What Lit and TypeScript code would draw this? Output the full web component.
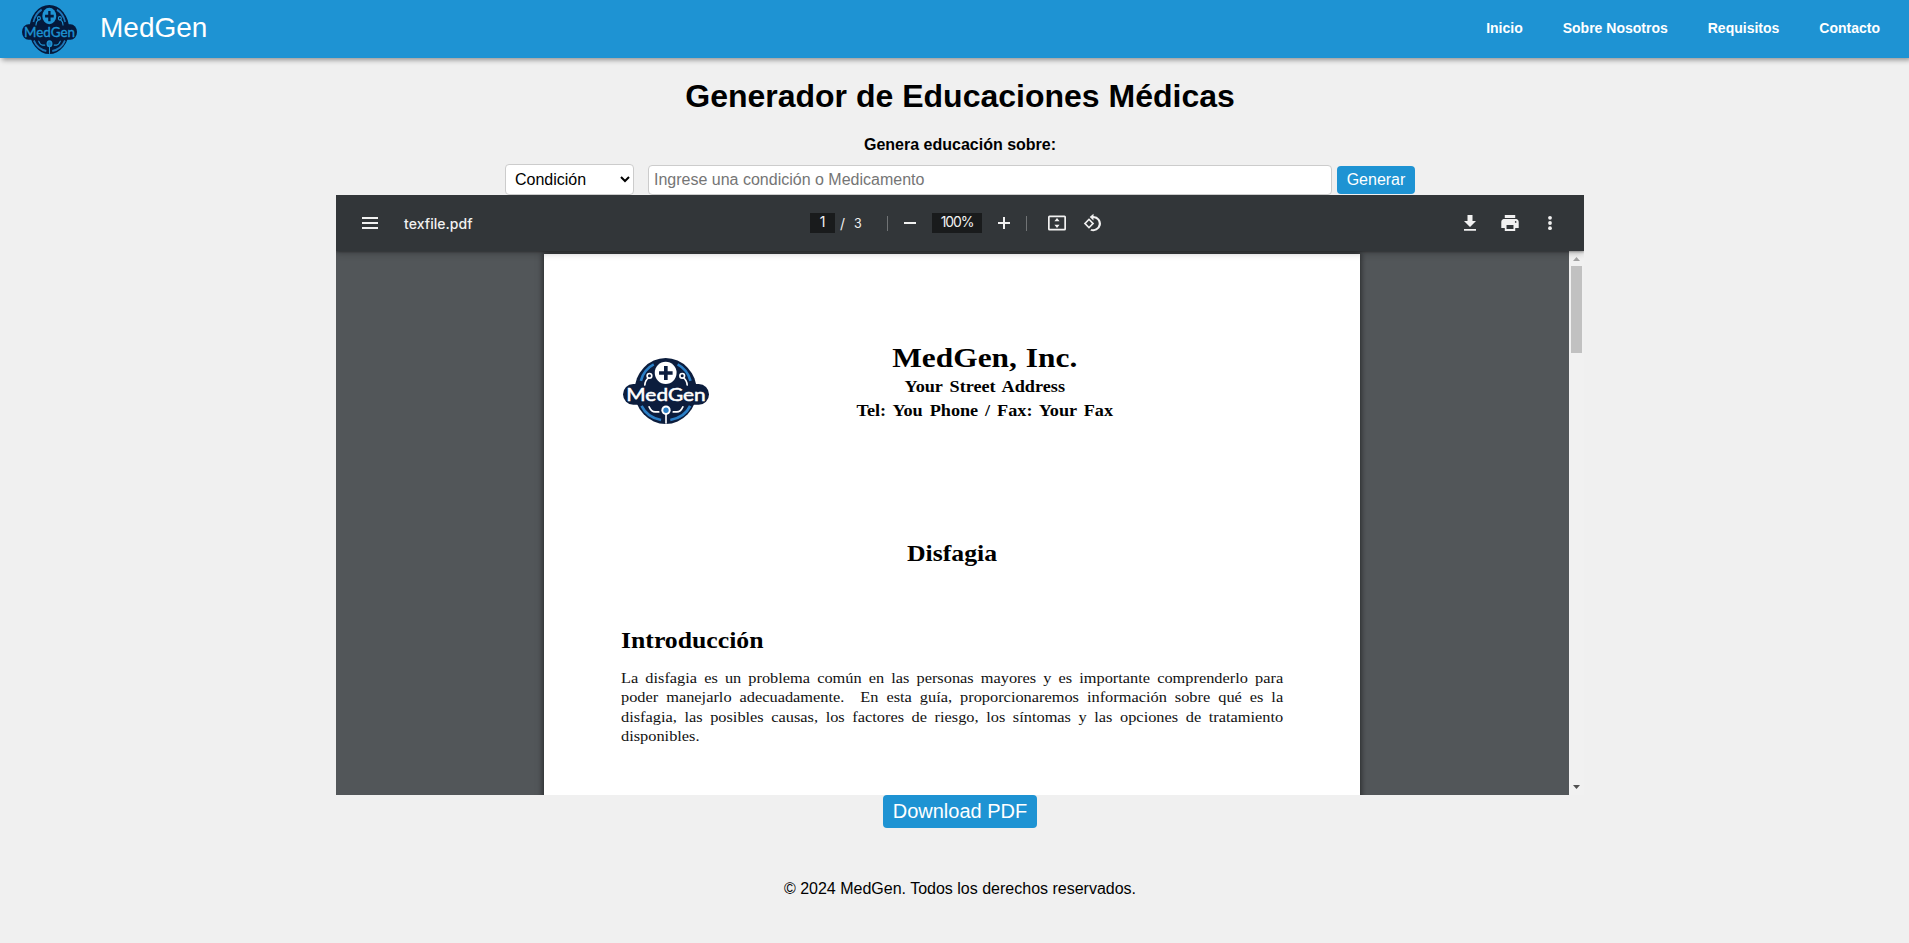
import { LitElement, html, css } from "lit";
import { customElement, property } from "lit/decorators.js";

@customElement("med-logo")
class MedLogo extends LitElement {
  static styles = css`
    :host { display: block; --ink: #0c1d3d; --light: #fff; --accent: #2b7fc6; }
    svg { display: block; width: 100%; height: 100%; }
    .ink { fill: var(--ink); }
    .light { fill: var(--light); }
    .accent { fill: var(--accent); }
    .arc { fill: none; stroke: var(--accent); stroke-width: 8; }
    .wire { fill: none; stroke: var(--light); stroke-width: 5; stroke-linecap: round; }
    .word { fill: var(--light); stroke: var(--light); stroke-width: 1.5; font: 400 53px Lato, sans-serif; }
  `;
  render() {
    return html`<svg viewBox="40 54 260 196" preserveAspectRatio="none">
      <ellipse class="ink" cx="169" cy="152" rx="94" ry="98" />
      <path class="arc" d="M94 122 Q103 88 133 73 M205 73 Q235 88 244 122 M96 196 Q113 230 155 238 M183 238 Q227 230 243 196" />
      <rect class="ink" x="40" y="131" width="260" height="62" rx="31" />
      <circle class="light" cx="169" cy="98" r="33" />
      <path class="ink" d="M164 78h11v15h15v11h-15v15h-11v-15h-15V93h15z" />
      <path class="wire" d="M106 134 Q107 120 117 113 M234 134 Q233 120 223 113 M119 199 Q126 214 137 214 H148 M221 199 Q214 214 203 214 H192 M170 222V247" />
      <circle class="wire" cx="120" cy="107" r="7" />
      <circle class="wire" cx="219" cy="107" r="7" />
      <circle class="light" cx="170" cy="209" r="14" />
      <circle class="accent" cx="170" cy="209" r="8" />
      <text class="word" x="50" y="183" textLength="240" lengthAdjust="spacingAndGlyphs">MedGen</text>
    </svg>`;
  }
}

@customElement("pdf-viewer")
class PdfViewer extends LitElement {
  @property() name = "texfile.pdf";

  static styles = css`
    :host { display: flex; flex-direction: column; width: 1248px; height: 600px; overflow: hidden; background: #525659; }
    .toolbar {
      display: grid; grid-template-columns: 1fr auto 1fr; align-items: center; flex: none; height: 56px;
      background: #323639; color: #f1f1f1; position: relative; z-index: 1; box-sizing: border-box;
      box-shadow: 0 -2px 8px rgba(0,0,0,.09), 0 4px 8px rgba(0,0,0,.06), 0 1px 2px rgba(0,0,0,.3), 0 2px 6px rgba(0,0,0,.15);
      font: 500 14px Inter, sans-serif;
    }
    .start { display: flex; align-items: center; gap: 22px; padding-left: 22px; }
    .title { letter-spacing: 0.05px; }
    .mid { display: flex; align-items: center; font-weight: 400; padding-right: 7px; }
    .end { display: flex; justify-content: flex-end; gap: 16px; padding-right: 22px; }
    svg { display: block; width: 24px; height: 24px; fill: #f1f1f1; flex: none; }
    .small { width: 20px; height: 20px; }
    .field { background: #191b1c; height: 20px; line-height: 18px; text-align: center; }
    .pageno { width: 25px; }
    .zoom { width: 50px; letter-spacing: -1.1px; margin: 0 12px; }
    .slash { margin-left: 5px; width: 8px; }
    .count { margin-left: 6px; width: 33px; font-size: 12.5px; }
    .bar { width: 1px; height: 15px; background: #707375; }
    .out { margin-left: 12px; }
    .in { margin-right: 12px; }
    .fit { margin: 0 16px 0 20px; }
    .body { flex: 1; display: flex; min-height: 0; }
    .canvas { flex: 1; display: flex; align-items: flex-start; padding: 3px 0 0 208px; }
    .page {
      box-sizing: border-box; width: 816px; height: 1056px; background: #fff; color: #111;
      padding: 86px 77px 0; font-family: "Liberation Serif", serif; box-shadow: 0 0 6px 1px rgba(0,0,0,.55);
    }
    .letterhead { display: grid; grid-template-columns: 86px 1fr; height: 180px; }
    .mark { width: 86px; height: 66px; margin: 18px 0 0 2px; }
    .firm { display: flex; flex-direction: column; align-items: center; font-weight: 700; padding-right: 18px; color: #000; transform: scaleX(1.137); }
    .firm-name { font-size: 27.6px; line-height: 34px; margin-top: 1px; word-spacing: 1px; }
    .firm-line { font-size: 16px; line-height: 24px; white-space: nowrap; word-spacing: 2.1px; }
    .topic, .heading { font-size: 23px; line-height: 30px; font-weight: 700; color: #000; transform: scaleX(1.119); }
    .topic { text-align: center; margin: 19px 0 0; }
    .heading { margin: 57px 0 0; transform-origin: left; }
    .para { margin: 13px 0 0; width: 607.5px; font-size: 15px; line-height: 19.4px; transform: scaleX(1.09); transform-origin: left; }
    .line { display: block; text-align-last: justify; white-space: pre-wrap; }
    .last { text-align-last: left; }
    .scroll { width: 15px; background: #f1f1f1; display: flex; flex-direction: column; align-items: center; box-sizing: border-box; }
    .arrow { width: 7px; height: 4px; margin-top: 6px; fill: #a3a3a3; }
    .thumb { width: 11px; height: 87px; background: #c1c1c1; margin-top: 5px; }
    .down { margin-top: auto; margin-bottom: 6px; fill: #505050; }
  `;

  private lines = [
    "La disfagia es un problema común en las personas mayores y es importante comprenderlo para",
    "poder manejarlo adecuadamente. \u00a0En esta guía, proporcionaremos información sobre qué es la",
    "disfagia, las posibles causas, los factores de riesgo, los síntomas y las opciones de tratamiento",
  ];

  render() {
    return html`
      <div class="toolbar">
        <div class="start">
          <svg viewBox="0 0 24 24"><path d="M4 6h16v2H4zm0 5h16v2H4zm0 5h16v2H4z" /></svg>
          <span class="title">${this.name}</span>
        </div>
        <div class="mid">
          <span class="field pageno">1</span><span class="slash">/</span><span class="count">3</span>
          <span class="bar"></span>
          <svg class="small out" viewBox="0 0 20 20"><path d="M4 9h12v2H4z" /></svg>
          <span class="field zoom">100%</span>
          <svg class="small in" viewBox="0 0 20 20"><path d="M9 4h2v5h5v2h-5v5H9v-5H4V9h5z" /></svg>
          <span class="bar"></span>
          <svg class="small fit" viewBox="0 0 20 20"><path fill-rule="evenodd" d="M2.5 2.5h15A1.5 1.5 0 0 1 19 4v12a1.5 1.5 0 0 1-1.5 1.5h-15A1.5 1.5 0 0 1 1 16V4a1.5 1.5 0 0 1 1.5-1.5zM2.700 4.200v11.600h14.600V4.200zM10 5l2.600 3.200H7.400zM10 15l-2.600-3.200h5.200z" /></svg>
          <svg class="small" viewBox="0 0 20 20"><path fill-rule="evenodd" d="M6 5.300 11.200 10.500 6 15.700.8 10.500zM6 7.600 3.100 10.500 6 13.400 8.900 10.500z" /><path d="M10.500.800v2.300a7.500 7.500 0 1 1-3.200 14.300l1.300-1.300a5.700 5.700 0 1 0 1.900-11.200v2.500L6.700 4.100z" /></svg>
        </div>
        <div class="end">
          <svg viewBox="0 0 24 24"><path d="M18 10h-3.500V4h-5v6H6l6 6zM6 18v1.800h12V18z" /></svg>
          <svg viewBox="0 0 24 24"><path transform="translate(1.560 0) scale(.87 1)" fill-rule="evenodd" d="M19 8H5c-1.660 0-3 1.340-3 3v6h4v3h12v-3h4v-6c0-1.660-1.340-3-3-3zm-3 10H8v-4h8zm2.500-6.200a.9.900 0 1 1 0-1.800.9.900 0 0 1 0 1.800zM18 4H6v3h12z" /></svg>
          <svg viewBox="0 0 24 24"><circle cx="12" cy="6.800" r="1.900" /><circle cx="12" cy="12" r="1.900" /><circle cx="12" cy="17.200" r="1.900" /></svg>
        </div>
      </div>
      <div class="body">
        <div class="canvas">
          <article class="page">
            <div class="letterhead">
              <med-logo class="mark"></med-logo>
              <div class="firm">
                <span class="firm-name">MedGen, Inc.</span>
                <span class="firm-line">Your Street Address</span>
                <span class="firm-line">Tel: You Phone / Fax: Your Fax</span>
              </div>
            </div>
            <h2 class="topic">Disfagia</h2>
            <h3 class="heading">Introducción</h3>
            <p class="para">
              ${this.lines.map((l) => html`<span class="line">${l}</span>`)}
              <span class="line last">disponibles.</span>
            </p>
          </article>
        </div>
        <div class="scroll">
          <svg class="arrow" viewBox="0 0 7 4"><path d="M3.500 0 7 4H0z" /></svg>
          <div class="thumb"></div>
          <svg class="arrow down" viewBox="0 0 7 4"><path d="M3.500 4 0 0h7z" /></svg>
        </div>
      </div>`;
  }
}

@customElement("app-root")
class AppRoot extends LitElement {
  static styles = css`
    :host { display: block; min-height: 943px; background: #f0f0f0; color: #000; font-family: "Liberation Sans", Arial, sans-serif; font-size: 16px; }
    .top {
      display: flex; align-items: center; height: 58px; box-sizing: border-box; background: #1e93d3; color: #fff;
      padding: 0 29px 0 22px; box-shadow: 2px 2px 5px rgba(0,0,0,.4);
    }
    .mark { width: 55px; height: 49px; margin-top: 1px; --light: #1e93d3; --accent: #1d76b8; --ink: #04193c; }
    .brand { font-size: 28px; margin-left: 23px; margin-top: -3px; flex: 1; }
    .nav { display: flex; gap: 40px; font-size: 14px; font-weight: 700; margin-top: -2px; }
    .link { color: #fff; text-decoration: none; }
    .main { display: flex; flex-direction: column; align-items: center; padding-left: 11px; }
    .title { font-size: 32px; line-height: 36px; margin: 20px 0 0; }
    .label { font-weight: 700; line-height: 18px; margin-top: 22px; }
    .form { display: flex; align-items: center; margin-top: 10px; height: 31px; }
    .kind { box-sizing: border-box; width: 129px; height: 31px; padding: 5px; border: 1px solid #ccc; border-radius: 4px; background: #fff; font: 16px "Liberation Sans", sans-serif; color: #000; }
    .query { box-sizing: border-box; width: 684px; height: 30px; margin: 1px 5px 0 14px; padding: 5px; border: 1px solid #ccc; border-radius: 4px; font: 16px "Liberation Sans", sans-serif; background: #fff; }
    .query::placeholder { color: #757575; }
    .btn { border: 0; border-radius: 4px; background: #1e93d3; color: #fff; font: 16px "Liberation Sans", sans-serif; padding: 5px 0; height: 28px; width: 78px; margin-top: 1px; white-space: nowrap; }
    .big { font-size: 20px; width: 154px; height: 33px; margin: 0; }
    .foot { margin: 52px 0 0; line-height: 18px; }
  `;

  private links = ["Inicio", "Sobre Nosotros", "Requisitos", "Contacto"];

  render() {
    return html`
      <header class="top">
        <med-logo class="mark"></med-logo>
        <span class="brand">MedGen</span>
        <nav class="nav">${this.links.map((l) => html`<a class="link" href="#">${l}</a>`)}</nav>
      </header>
      <main class="main">
        <h1 class="title">Generador de Educaciones Médicas</h1>
        <label class="label">Genera educación sobre:</label>
        <div class="form">
          <select class="kind"><option>Condición</option><option>Medicamento</option></select>
          <input class="query" placeholder="Ingrese una condición o Medicamento" />
          <button class="btn">Generar</button>
        </div>
        <pdf-viewer></pdf-viewer>
        <button class="btn big">Download PDF</button>
        <p class="foot">© 2024 MedGen. Todos los derechos reservados.</p>
      </main>`;
  }
}
